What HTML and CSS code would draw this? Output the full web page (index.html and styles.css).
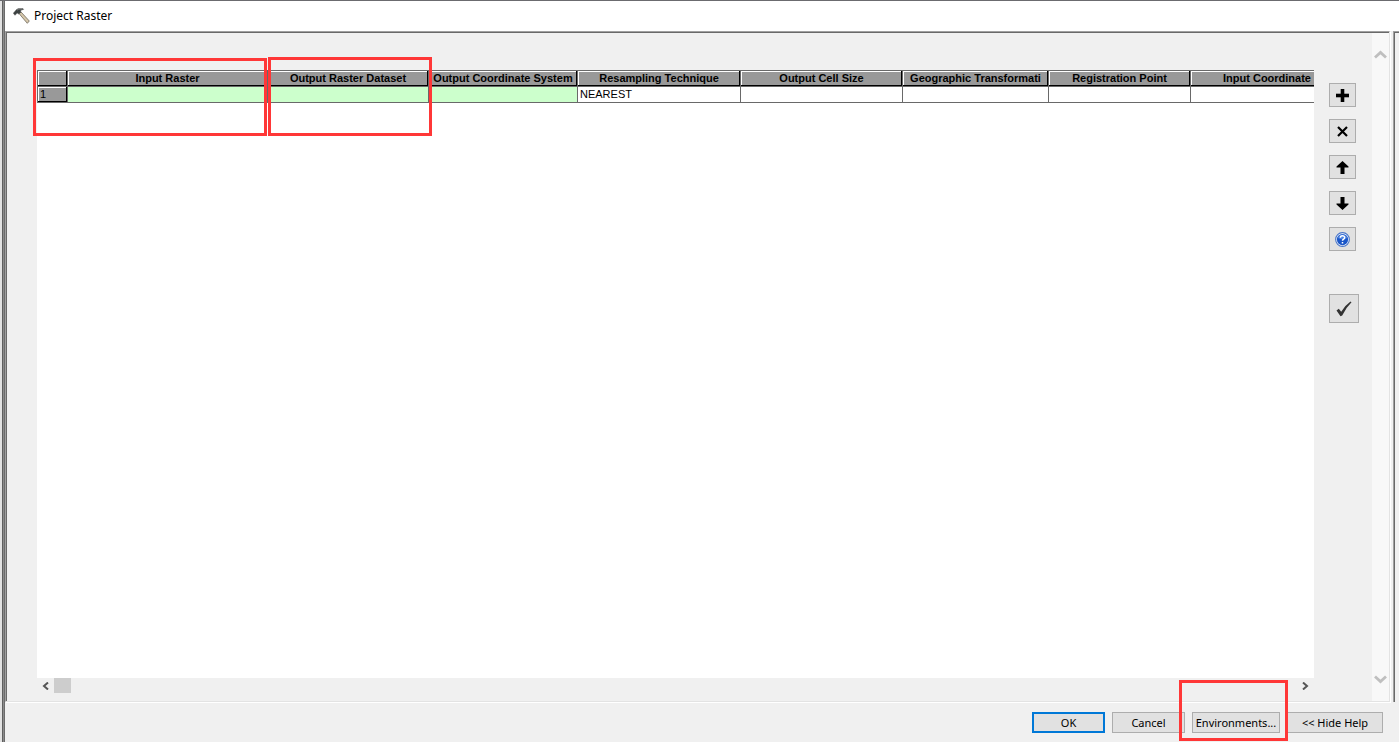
FILE: index.html
```html
<!DOCTYPE html>
<html lang="en">
<head>
<meta charset="utf-8">
<title>Project Raster</title>
<link rel="stylesheet" href="styles.css">
</head>
<body>
<div class="window">
  <header class="titlebar">
    <svg class="hammer" viewBox="0 0 17 17" aria-hidden="true">
      <path d="M6 5.5 8 4l8.300 9-2 2.300z" fill="#d6c8ac" stroke="#6f6759" stroke-width=".8"/>
      <path d="M.3 5.200 3.500 1.600 5.500.4h4.300l.8 1-2.800.8-.1 2.200L5.600 6 4.200 5 2 7.300z" fill="#3c4141" stroke="#555" stroke-width=".5"/>
      <path d="M4 2.200 5.800 1h3.400" fill="none" stroke="#a9adad" stroke-width=".6"/>
    </svg>
    <h1 class="title">Project Raster</h1>
  </header>

  <div class="panes">
    <main class="pane">
      <section class="grid-area">
        <div class="grid">
          <table class="batch">
            <colgroup>
              <col class="w-index"><col class="w-input"><col class="w-output"><col class="w-system"><col class="w-method"><col class="w-cell"><col class="w-transform"><col class="w-point"><col class="w-coord">
            </colgroup>
            <thead>
              <tr><th></th><th>Input Raster</th><th>Output Raster Dataset</th><th>Output Coordinate System</th><th>Resampling Technique</th><th>Output Cell Size</th><th>Geographic Transformati</th><th>Registration Point</th><th class="leading">Input Coordinate</th></tr>
            </thead>
            <tbody>
              <tr><th class="index" scope="row">1</th><td class="required"></td><td class="required"></td><td class="required"></td><td>NEAREST</td><td></td><td></td><td></td><td></td></tr>
            </tbody>
          </table>
        </div>
        <div class="hscroll">
          <button class="arrow" aria-label="Scroll left"><svg viewBox="0 0 7 8" width="7" height="8"><path d="M6 .5 2 4l4 3.500" fill="none" stroke="#555" stroke-width="2"/></svg></button>
          <span class="thumb"></span>
          <button class="arrow last" aria-label="Scroll right"><svg viewBox="0 0 7 8" width="7" height="8"><path d="M1 .5 5 4 1 7.500" fill="none" stroke="#555" stroke-width="2"/></svg></button>
        </div>
        <span class="mark mark-input"></span>
        <span class="mark mark-output"></span>
      </section>

      <div class="tools">
        <button class="tool" aria-label="Add row"><svg viewBox="0 0 13 13"><path d="M5 0h3v5h5v3H8v5H5V8H0V5h5z" stroke="#000" stroke-width=".6"/></svg></button>
        <button class="tool" aria-label="Delete row"><svg viewBox="0 0 13 13"><path d="m2 2 9 9m0-9-9 9" stroke="#000" stroke-width="2.200"/></svg></button>
        <button class="tool" aria-label="Move up"><svg viewBox="0 0 13 13"><path d="M6.500 0 12.500 5.500v1H8.500V13h-4V6.500h-4v-1z"/></svg></button>
        <button class="tool" aria-label="Move down"><svg viewBox="0 0 13 13"><path d="M6.500 13 .5 7.500v-1h4V0h4v6.500h4v1z"/></svg></button>
        <button class="tool help" aria-label="Help"><svg viewBox="0 0 16 16"><circle cx="8" cy="8" r="7.300" fill="#fff" stroke="#4a76c8" stroke-width="1.200"/><circle cx="8" cy="8" r="6" fill="#1a56c8"/><path d="M3 6.500a5.200 5.200 0 0 1 10 0Q8 9 3 6.500z" fill="#4c82e0"/><path d="M5.700 6.200C5.700 3.300 10.300 3.400 10.300 6 10.300 7.600 8 7.600 8 9.400M8 10.700v1.600" fill="none" stroke="#fff" stroke-width="1.600"/></svg></button>
        <button class="tool check" aria-label="Check values"><svg viewBox="0 0 16 16"><path d="M.5 9.500 2.800 7.800l2.400 3Q9 4.500 14.500.6l1 .6Q9.800 6.800 6.200 14.500L4.500 15.200z" fill="#333"/></svg></button>
      </div>

      <div class="vscroll">
        <button class="arrow" aria-label="Scroll up"><svg viewBox="0 0 13 9" width="13" height="9"><path d="m1 7.500 5.500-5 5.500 5" fill="none" stroke="#bfbfbf" stroke-width="2.800"/></svg></button>
        <button class="arrow" aria-label="Scroll down"><svg viewBox="0 0 13 9" width="13" height="9"><path d="m1 1.500 5.500 5 5.500-5" fill="none" stroke="#bfbfbf" stroke-width="2.800"/></svg></button>
      </div>
    </main>
    <aside class="help-pane"></aside>
  </div>

  <footer class="actions">
    <button class="action default">OK</button>
    <button class="action">Cancel</button>
    <div class="marked"><button class="action env">Environments...</button><span class="mark mark-env"></span></div>
    <button class="action hide-help">&lt;&lt; Hide Help</button>
  </footer>
</div>
</body>
</html>
```
FILE: styles.css
```css
* { box-sizing: border-box; }

body {
  margin: 0;
  background: #f0f0f0;
  color: #000;
  font-family: "Noto Sans", sans-serif;
  font-size: 12px;
}

button { margin: 0; padding: 0; font: inherit; color: inherit; }
svg { display: block; }

.window {
  display: flex;
  flex-direction: column;
  min-height: 100vh;
  padding-left: 5px;
  border-top: 1px solid #6b6b6f;
  background: linear-gradient(90deg, #e2e2e2 2px, #5f5f5f 2px 3px, #8b8b8b 3px 4px, #6b6b6b 4px 5px, #f0f0f0 5px);
}

.titlebar {
  display: flex;
  align-items: center;
  gap: 4px;
  height: 30px;
  padding: 0 8px;
  background: #fff;
}
.hammer { width: 17px; height: 17px; }
.title { margin: 0; font-size: 12px; font-weight: 400; line-height: 16px; }

.panes { display: flex; flex: 1; gap: 3px; }

.pane {
  display: flex;
  flex: 1;
  min-width: 0;
  border: 1px solid #e3e3e3;
  border-top-color: #a0a0a0;
  border-left-color: #a0a0a0;
  box-shadow: inset 1px 1px #696969, 1px 1px #fff;
}
.help-pane {
  width: 6px;
  border-top: 1px solid #a0a0a0;
  border-left: 1px solid #a0a0a0;
  box-shadow: inset 1px 1px #696969;
}

.grid-area {
  position: relative;
  display: flex;
  flex: 1;
  flex-direction: column;
  min-width: 0;
  padding: 38px 0 8px 31px;
}
.grid { flex: 1; overflow: hidden; background: #fff; }

.batch {
  width: 1364px;
  table-layout: fixed;
  border-collapse: separate;
  border-spacing: 0;
  border-top: 1px solid #696969;
  border-left: 1px solid #696969;
  font: 11px/13px "Liberation Sans", Arial, sans-serif;
}
.w-index { width: 30px; }
.w-input { width: 200px; }
.w-output { width: 161px; }
.w-system { width: 149px; }
.w-method { width: 163px; }
.w-cell { width: 162px; }
.w-transform { width: 146px; }
.w-point { width: 142px; }
.w-coord { width: 210px; }

.batch th, .batch td {
  height: 16px;
  padding: 0 2px;
  overflow: hidden;
  border-right: 1px solid #696969;
  border-bottom: 1px solid #696969;
  text-align: left;
  white-space: nowrap;
}
.batch th {
  padding: 0 1px;
  background: #999;
  box-shadow: inset -1px -1px #000, inset 1px 1px #fff;
  text-align: center;
}
.batch .leading { padding-left: 32px; text-align: left; }
.batch .index { padding: 0 2px; font-weight: 400; text-align: left; }
.batch .required { background: #cfc; }

.hscroll { display: flex; align-items: center; height: 15px; }
.arrow {
  display: grid;
  width: 17px;
  height: 15px;
  place-items: center;
  border: 0;
  background: none;
}
.thumb { width: 17px; height: 15px; background: #cdcdcd; }
.last { margin-left: auto; }

.tools {
  display: flex;
  flex-direction: column;
  gap: 12px;
  padding: 51px 13px 0 15px;
}
.tool {
  display: grid;
  width: 27px;
  height: 24px;
  place-items: center;
  border: 1px solid #adadad;
  background: #e1e1e1;
}
.tool svg { width: 13px; height: 13px; }
.help svg { width: 15px; height: 15px; }
.check { width: 30px; height: 29px; margin-top: 31px; }
.check svg { width: 16px; height: 16px; }

.vscroll {
  display: flex;
  flex-direction: column;
  justify-content: space-between;
  width: 17px;
  margin-top: 1px;
  padding: 14px 0;
  background: #f8f8f8;
}

.actions {
  display: flex;
  justify-content: flex-end;
  gap: 7px;
  padding: 10px 16px 9px;
}
.action {
  width: 73px;
  height: 21px;
  border: 1px solid #adadad;
  background: #e1e1e1;
  font-size: 11px;
  line-height: 16px;
}
.default { border: 2px solid #0078d7; }
.env { width: 88px; }
.hide-help { width: 96px; }
.marked { position: relative; }

.mark { position: absolute; border: 3px solid #ff3737; pointer-events: none; }
.mark-input { top: 26px; left: 27px; width: 234px; height: 78px; }
.mark-output { top: 25px; left: 262px; width: 164px; height: 79px; }
.mark-env { top: -32px; left: -13px; width: 109px; height: 61px; }
```
